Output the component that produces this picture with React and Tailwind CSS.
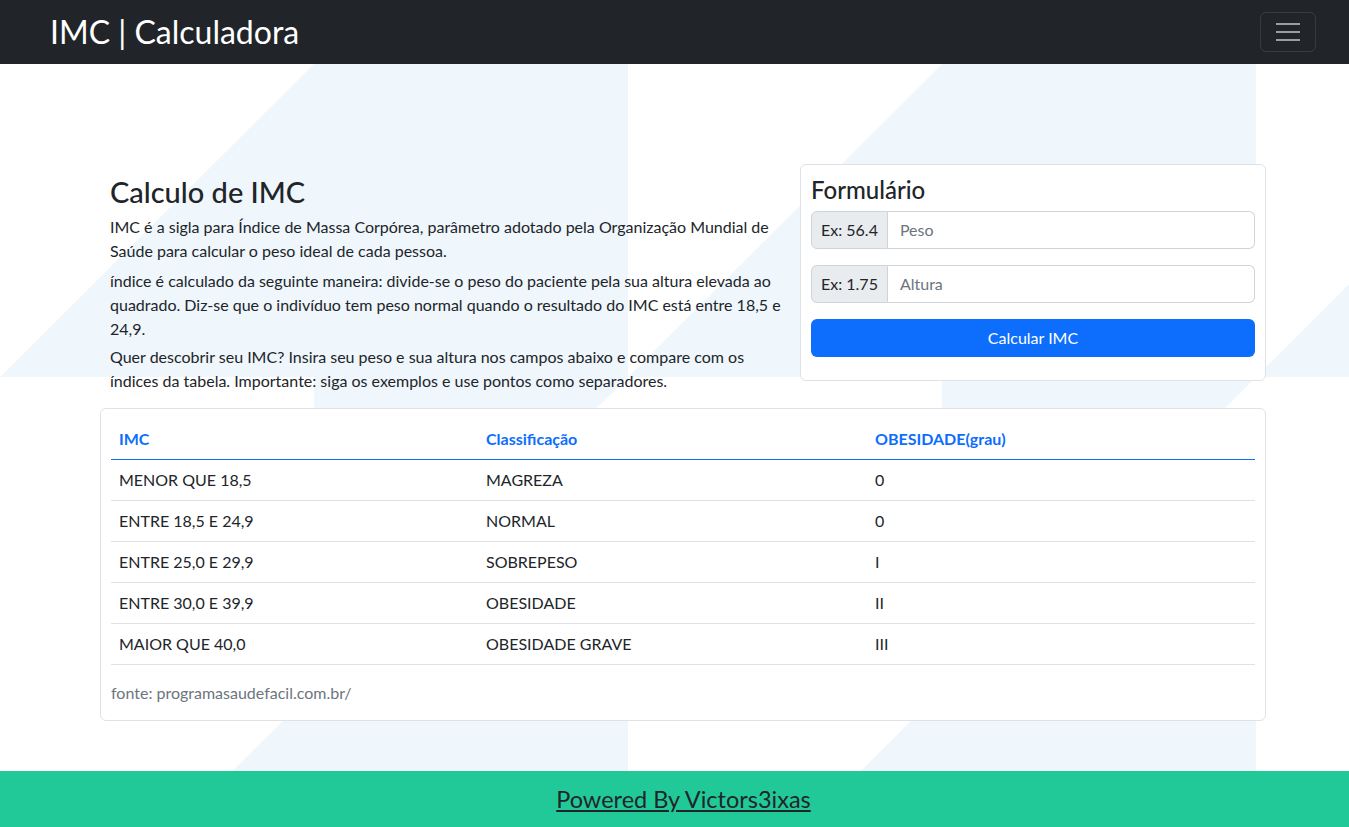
import React from "react";

const rows = [
  { imc: "MENOR QUE 18,5", cls: "MAGREZA", grau: "0" },
  { imc: "ENTRE 18,5 E 24,9", cls: "NORMAL", grau: "0" },
  { imc: "ENTRE 25,0 E 29,9", cls: "SOBREPESO", grau: "I" },
  { imc: "ENTRE 30,0 E 39,9", cls: "OBESIDADE", grau: "II" },
  { imc: "MAIOR QUE 40,0", cls: "OBESIDADE GRAVE", grau: "III" },
];

// one light tile of the background pattern
const tile = (ox, oy) =>
  [
    [ox + 314, oy],
    [ox + 628, oy],
    [ox + 628, oy + 313],
    [ox + 314, oy + 626],
    [ox + 314, oy + 313],
    [ox, oy + 313],
  ]
    .map((p) => p.join(","))
    .join(" ");

const Background = () => (
  <svg
    className="absolute inset-0 w-full h-full"
    viewBox="0 0 1349 707"
    preserveAspectRatio="xMinYMin slice"
  >
    {[0, 628, 1256].map((ox) =>
      [0, 626].map((oy) => (
        <polygon key={`${ox}-${oy}`} points={tile(ox, oy)} fill="#eff6fc" />
      ))
    )}
  </svg>
);

const InputGroup = ({ hint, placeholder }) => (
  <div className="flex h-[38px] w-full">
    <span className="flex items-center px-[9px] bg-[#e9ecef] border border-[#ced4da] rounded-l-[6px] text-[#212529] whitespace-nowrap">
      {hint}
    </span>
    <input
      className="flex-1 min-w-0 px-3 bg-white border border-l-0 border-[#ced4da] rounded-r-[6px] text-[#212529] placeholder:text-[#6c757d] outline-none"
      placeholder={placeholder}
    />
  </div>
);

export default function App() {
  return (
    <div className="min-h-[827px] flex flex-col bg-white text-[16px] leading-[24px] text-[#212529] font-['Lato','Open_Sans',sans-serif]">
      {/* Navbar */}
      <nav className="h-16 bg-[#212529] flex items-center justify-between pl-[50px] pr-[33px]">
        <span className="text-white text-[32px] leading-none">IMC | Calculadora</span>
        <button className="w-14 h-10 border border-white/10 rounded-[6px] flex flex-col items-center justify-center gap-[6px]">
          <span className="block w-6 h-[2px] bg-white/55" />
          <span className="block w-6 h-[2px] bg-white/55" />
          <span className="block w-6 h-[2px] bg-white/55" />
        </button>
      </nav>

      {/* Main */}
      <main className="relative h-[707px] pt-[100px]">
        <Background />

        <div className="relative flex items-start">
          {/* Text */}
          <div className="ml-[110px] w-[685px] pt-[10px]">
            <h3 className="text-[29px] leading-[35px] font-medium mb-[6px]">Calculo de IMC</h3>
            <p className="mb-[6px]">
              IMC é a sigla para Índice de Massa Corpórea, parâmetro adotado pela Organização Mundial de
              Saúde para calcular o peso ideal de cada pessoa.
            </p>
            <p className="mb-[4px]">
              índice é calculado da seguinte maneira: divide-se o peso do paciente pela sua altura elevada ao
              quadrado. Diz-se que o indivíduo tem peso normal quando o resultado do IMC está entre 18,5 e
              24,9.
            </p>
            <p>
              Quer descobrir seu IMC? Insira seu peso e sua altura nos campos abaixo e compare com os
              índices da tabela. Importante: siga os exemplos e use pontos como separadores.
            </p>
          </div>

          {/* Form card */}
          <div className="ml-[5px] w-[466px] bg-white border border-[#dee2e6] rounded-[6px] px-[10px] pt-[10px] pb-[23px]">
            <h4 className="text-[24px] leading-[29px] font-medium mb-[7px]">Formulário</h4>
            <div className="mb-[16px]">
              <InputGroup hint="Ex: 56.4" placeholder="Peso" />
            </div>
            <div className="mb-[16px]">
              <InputGroup hint="Ex: 1.75" placeholder="Altura" />
            </div>
            <button className="w-full h-[38px] bg-[#0d6efd] text-white rounded-[6px]">Calcular IMC</button>
          </div>
        </div>

        {/* Table card */}
        <div className="relative mt-[15px] ml-[100px] w-[1166px] bg-white border border-[#dee2e6] rounded-[6px] p-[10px]">
          <table className="w-full border-collapse text-left">
            <thead>
              <tr className="border-b border-[#0d6efd] text-[#0d6efd]">
                <th className="w-[367px] h-10 px-2 font-bold">IMC</th>
                <th className="w-[389px] h-10 px-2 font-bold">Classificação</th>
                <th className="h-10 px-2 font-bold">OBESIDADE(grau)</th>
              </tr>
            </thead>
            <tbody>
              {rows.map((r) => (
                <tr key={r.imc} className="border-b border-[#dee2e6]">
                  <td className="h-[41px] px-2">{r.imc}</td>
                  <td className="h-[41px] px-2">{r.cls}</td>
                  <td className="h-[41px] px-2">{r.grau}</td>
                </tr>
              ))}
            </tbody>
          </table>
          <p className="pt-[16px] pb-[5px] text-[#6c757d]">fonte: programasaudefacil.com.br/</p>
        </div>
      </main>

      {/* Footer */}
      <footer className="h-14 bg-[#20c997] flex items-center justify-center pl-[18px]">
        <a href="#" className="text-[23.5px] text-[#212529] underline">
          Powered By Victors3ixas
        </a>
      </footer>
    </div>
  );
}
